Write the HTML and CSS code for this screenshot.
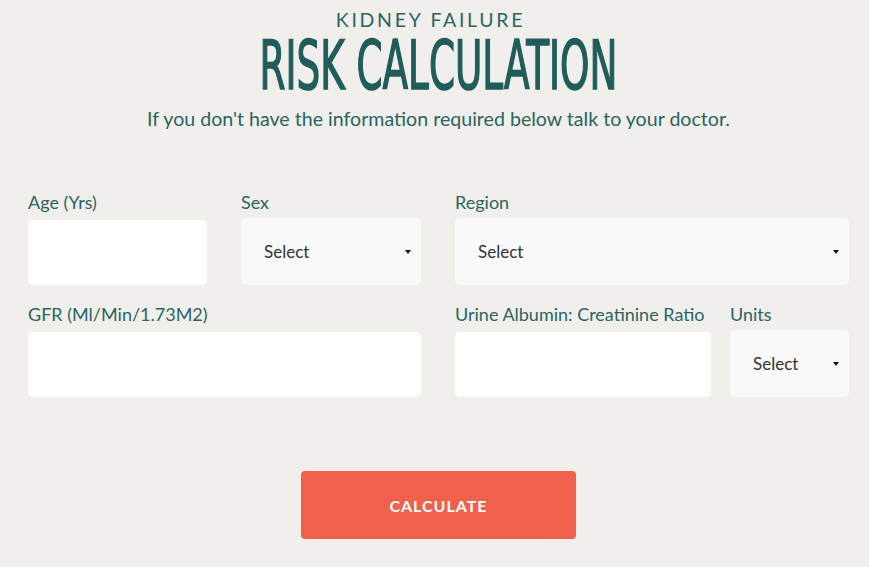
FILE: index.html
```html
<!DOCTYPE html>
<html>
<head>
<meta charset="utf-8">
<link rel="stylesheet" href="styles.css">
</head>
<body>
<div class="page">
  <header class="head">
    <div class="kicker">KIDNEY FAILURE</div>
    <h1 class="title">RISK CALCULATION</h1>
    <p class="sub">If you don't have the information required below talk to your doctor.</p>
  </header>
  <form class="form">
    <div class="row">
      <div class="field f-age">
        <label class="lbl">Age (Yrs)</label>
        <div class="input"></div>
      </div>
      <div class="field f-sex">
        <label class="lbl">Sex</label>
        <div class="select"><span>Select</span><span class="caret"></span></div>
      </div>
      <div class="field f-grow">
        <label class="lbl">Region</label>
        <div class="select"><span>Select</span><span class="caret"></span></div>
      </div>
    </div>
    <div class="row row2">
      <div class="field f-gfr">
        <label class="lbl">GFR (Ml/Min/1.73M2)</label>
        <div class="input"></div>
      </div>
      <div class="pair">
        <div class="field f-grow">
          <label class="lbl">Urine Albumin: Creatinine Ratio</label>
          <div class="input"></div>
        </div>
        <div class="field f-units">
          <label class="lbl">Units</label>
          <div class="select"><span>Select</span><span class="caret"></span></div>
        </div>
      </div>
    </div>
    <div class="actions">
      <button type="button" class="btn">CALCULATE</button>
    </div>
  </form>
</div>
</body>
</html>
```
FILE: styles.css
```css
html, body {
  margin: 0;
  padding: 0;
  background: #f0efec;
}
body {
  font-family: "Lato", "Open Sans", sans-serif;
  color: #2b6461;
}
.page {
  padding: 0 20px 0 28px;
}
.head {
  text-align: center;
  padding-top: 8px;
}
.kicker {
  font-size: 19.5px;
  letter-spacing: 2.7px;
  line-height: 24px;
  color: #2b6461;
  padding-right: 16px;
}
.title {
  margin: 4px 0 0;
  font-family: "DejaVu Sans Condensed", "DejaVu Sans", sans-serif;
  font-weight: normal;
  font-size: 68px;
  line-height: 59px;
  color: #1f5c5a;
  -webkit-text-stroke: 1.6px #1f5c5a;
  transform: scaleX(0.61);
  white-space: nowrap;
}
.sub {
  margin: 12px 0 0;
  font-size: 19.6px;
  line-height: 24px;
  color: #2b6461;
}
.form {
  margin-top: 60px;
}
.row {
  display: flex;
  gap: 34px;
}
.row2 {
  margin-top: 18px;
}
.field {
  display: flex;
  flex-direction: column;
}
.f-age { width: 179px; }
.f-sex { width: 180px; }
.f-grow { flex: 1; min-width: 0; }
.f-gfr { width: 393px; }
.f-units { width: 119px; }
.pair {
  flex: 1;
  display: flex;
  gap: 19px;
}
.lbl {
  font-size: 18px;
  line-height: 22px;
  color: #2b6461;
  margin-bottom: 7px;
  white-space: nowrap;
}
.input {
  height: 65px;
  background: #ffffff;
  border-radius: 5px;
}
.select {
  height: 67px;
  margin-top: -2px;
  background: #f9f9f9;
  border-radius: 5px;
  display: flex;
  align-items: center;
  justify-content: space-between;
  padding: 0 10px 0 23px;
  font-size: 17px;
  color: #333;
}
.caret {
  width: 0;
  height: 0;
  border-left: 3.5px solid transparent;
  border-right: 3.5px solid transparent;
  border-top: 4px solid #111;
}
.actions {
  display: flex;
  justify-content: center;
  margin-top: 74px;
}
.btn {
  width: 275px;
  height: 68px;
  border: 0;
  border-radius: 4px;
  background: #ef614a;
  color: #fff;
  font-family: "Lato", sans-serif;
  font-weight: bold;
  font-size: 16px;
  letter-spacing: 1px;
}
```
